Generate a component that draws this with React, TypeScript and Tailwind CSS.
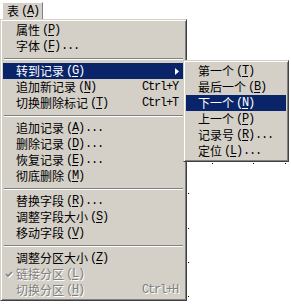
type Entry =
  | "sep"
  | {
      label: string;
      hot: string;
      dots?: boolean;
      shortcut?: string;
      arrow?: boolean;
      active?: boolean;
      disabled?: boolean;
      checked?: boolean;
    };

const mainItems: Entry[] = [
  { label: "属性", hot: "P" },
  { label: "字体", hot: "F", dots: true },
  "sep",
  { label: "转到记录", hot: "G", arrow: true, active: true },
  { label: "追加新记录", hot: "N", shortcut: "Ctrl+Y" },
  { label: "切换删除标记", hot: "T", shortcut: "Ctrl+T" },
  "sep",
  { label: "追加记录", hot: "A", dots: true },
  { label: "删除记录", hot: "D", dots: true },
  { label: "恢复记录", hot: "E", dots: true },
  { label: "彻底删除", hot: "M" },
  "sep",
  { label: "替换字段", hot: "R", dots: true },
  { label: "调整字段大小", hot: "S" },
  { label: "移动字段", hot: "V" },
  "sep",
  { label: "调整分区大小", hot: "Z" },
  { label: "链接分区", hot: "L", disabled: true, checked: true },
  { label: "切换分区", hot: "H", disabled: true, shortcut: "Ctrl+H" },
];

const subItems: Entry[] = [
  { label: "第一个", hot: "T" },
  { label: "最后一个", hot: "B" },
  { label: "下一个", hot: "N", active: true },
  { label: "上一个", hot: "P" },
  { label: "记录号", hot: "R", dots: true },
  { label: "定位", hot: "L", dots: true },
];

const frame =
  "border border-t-[#d4d0c8] border-l-[#d4d0c8] border-b-[#404040] border-r-[#404040] bg-[#d4d0c8] p-[2px] shadow-[inset_1px_1px_0_#ffffff,inset_-1px_-1px_0_#808080]";

const mono = "font-['Liberation_Mono',monospace] text-[12px] tracking-[-1.2px]";

function Label({ item }: { item: Exclude<Entry, "sep"> }) {
  return (
    <span className="flex items-center whitespace-nowrap">
      {item.label}
      <span className={`ml-[2px] ${mono}`}>
        (<u className="underline-offset-2">{item.hot}</u>)
      </span>
      {item.dots && <span className={`ml-[1px] ${mono}`}>...</span>}
    </span>
  );
}

function MenuList({ items, pad }: { items: Entry[]; pad: string }) {
  return (
    <>
      {items.map((item, i) => {
        if (item === "sep") {
          return (
            <div key={i} className="flex h-[9px] items-center px-[1px]">
              <div className="h-[2px] w-full border-t border-t-[#808080] border-b border-b-white" />
            </div>
          );
        }
        const tone = item.active
          ? "bg-[#0a246a] text-white"
          : item.disabled
            ? "text-[#808080] [text-shadow:1px_1px_0_#ffffff]"
            : "text-black";
        return (
          <div key={i} className={`relative flex h-[16px] items-center ${pad} pr-[6px] ${tone}`}>
            {item.checked && (
              <svg className="absolute left-[2px] top-[5px]" width="8" height="7" viewBox="0 0 8 7">
                <path d="M1 3 L3 5 L7 1" stroke="#ffffff" strokeWidth="1.6" fill="none" transform="translate(1 1)" />
                <path d="M1 3 L3 5 L7 1" stroke="#808080" strokeWidth="1.6" fill="none" />
              </svg>
            )}
            <Label item={item} />
            <span className="flex-1" />
            {item.shortcut && <span className={mono}>{item.shortcut}</span>}
            {item.arrow && (
              <svg width="4" height="7" viewBox="0 0 4 7" className="mr-[-1px]">
                <polygon points="0,0 4,3.5 0,7" fill="#ffffff" />
              </svg>
            )}
          </div>
        );
      })}
    </>
  );
}

const dots = [
  [188, 193],
  [188, 228],
  [188, 262],
  [188, 296],
  [212, 163],
  [253, 163],
  [285, 163],
];

export default function App() {
  return (
    <div className="relative h-[305px] w-[291px] overflow-hidden bg-white font-['Noto_Sans_CJK_SC','Noto_Sans',sans-serif] text-[12px] leading-none">
      {dots.map(([x, y]) => (
        <div key={`${x}-${y}`} className="absolute h-[1px] w-[1px] bg-black" style={{ left: x, top: y }} />
      ))}

      <div className="flex h-[19px] items-end pl-[2px]">
        <div className="flex h-[17px] w-[41px] items-center border-t border-l border-t-white border-l-white border-r border-r-[#808080] bg-[#d4d0c8] pl-[4px] text-black">
          表
          <span className={`ml-[2px] ${mono}`}>
            (<u className="underline-offset-2">A</u>)
          </span>
        </div>
      </div>

      <div className={`relative w-[187px] ${frame}`}>
        <MenuList items={mainItems} pad="pl-[13px]" />
      </div>

      <div className={`absolute left-[183px] top-[60px] w-[106px] ${frame}`}>
        <MenuList items={subItems} pad="pl-[12px]" />
      </div>
    </div>
  );
}
